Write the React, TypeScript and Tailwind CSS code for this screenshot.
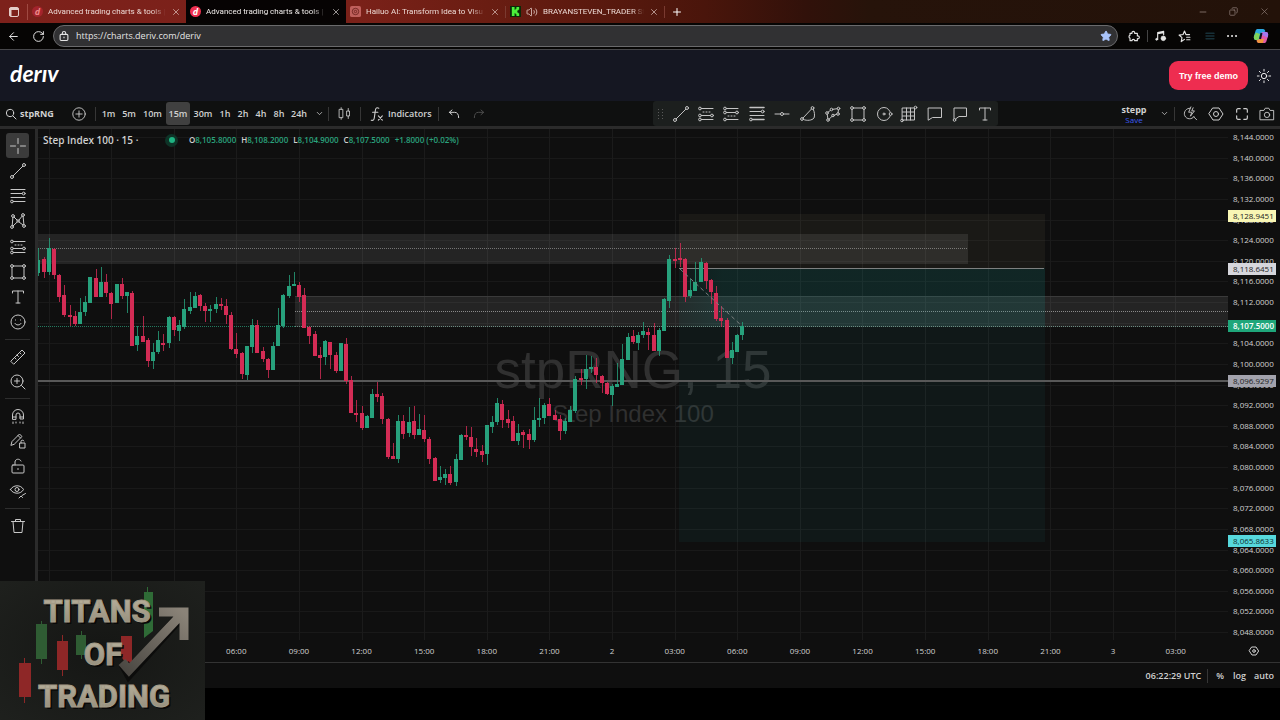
import type { ReactNode } from 'react';
import { ArrowLeft, ChevronDown, Copy, Minus, Plus, RotateCw, Star, Volume2, X } from 'lucide-react';

type Candle = [dir: 'u' | 'd', high: number, top: number, bottom: number, low: number];

// one entry per 15 minute bar, y values in chart space
const candles: Candle[] = [
    ['u', 248, 260, 273, 276], ['d', 257, 259, 272, 278], ['u', 238, 248, 272, 275], ['d', 248, 249, 275, 279],
    ['d', 274, 275, 297, 302], ['d', 285, 295, 315, 317], ['d', 305, 315, 316, 326], ['d', 311, 316, 324, 326],
    ['u', 298, 312, 324, 324], ['u', 296, 302, 312, 316], ['u', 277, 277, 303, 303], ['d', 269, 278, 297, 297],
    ['u', 267, 282, 297, 297], ['d', 274, 282, 293, 297], ['d', 292, 293, 304, 319], ['u', 284, 284, 303, 303],
    ['d', 278, 284, 296, 299], ['u', 292, 292, 296, 313], ['d', 291, 293, 346, 346], ['u', 326, 336, 345, 351],
    ['d', 316, 336, 342, 342], ['d', 338, 340, 361, 367], ['u', 343, 352, 361, 369], ['u', 331, 340, 352, 354],
    ['d', 334, 343, 344, 351], ['u', 316, 317, 343, 348], ['d', 316, 317, 330, 336], ['u', 320, 325, 331, 341],
    ['u', 299, 309, 327, 329], ['u', 292, 307, 311, 314], ['u', 292, 296, 308, 308], ['d', 294, 295, 306, 311],
    ['d', 303, 306, 311, 322], ['u', 305, 309, 311, 322], ['u', 297, 304, 309, 313], ['d', 298, 304, 305, 310],
    ['d', 299, 306, 315, 324], ['d', 312, 315, 349, 350], ['d', 333, 349, 354, 358], ['d', 352, 353, 374, 379],
    ['u', 346, 346, 375, 380], ['u', 319, 325, 347, 353], ['d', 320, 325, 353, 353], ['d', 347, 351, 359, 362],
    ['d', 358, 359, 370, 378], ['u', 342, 346, 370, 370], ['u', 308, 325, 346, 346], ['u', 294, 295, 326, 328],
    ['u', 275, 286, 296, 298], ['u', 272, 284, 286, 286], ['d', 282, 285, 297, 302], ['d', 288, 295, 328, 328],
    ['d', 326, 327, 336, 344], ['d', 331, 334, 356, 356], ['d', 347, 355, 358, 379], ['u', 340, 341, 357, 365],
    ['d', 342, 342, 355, 369], ['d', 352, 355, 371, 373], ['u', 343, 343, 371, 371], ['d', 338, 344, 381, 384],
    ['d', 376, 380, 413, 413], ['d', 400, 413, 414, 422], ['d', 406, 413, 428, 430], ['u', 415, 416, 428, 428],
    ['u', 389, 394, 418, 418], ['d', 382, 394, 397, 402], ['d', 393, 396, 419, 424], ['d', 418, 419, 457, 459],
    ['d', 443, 456, 459, 459], ['u', 415, 421, 459, 463], ['d', 415, 421, 434, 439], ['u', 407, 422, 433, 437],
    ['d', 406, 421, 435, 439], ['u', 414, 429, 435, 435], ['d', 415, 430, 439, 442], ['d', 437, 439, 459, 464],
    ['d', 457, 458, 481, 481], ['u', 466, 477, 480, 483], ['u', 469, 474, 478, 485], ['d', 466, 474, 483, 485],
    ['u', 454, 459, 482, 486], ['u', 434, 435, 460, 460], ['d', 426, 435, 437, 440], ['d', 427, 437, 447, 456],
    ['d', 438, 449, 452, 457], ['d', 445, 451, 455, 462], ['u', 425, 425, 454, 465], ['u', 416, 422, 427, 433],
    ['u', 398, 403, 422, 425], ['d', 400, 404, 420, 428], ['d', 410, 419, 423, 428], ['d', 416, 421, 441, 441],
    ['u', 424, 433, 441, 445], ['d', 430, 432, 435, 448], ['d', 429, 434, 440, 449], ['u', 407, 420, 440, 442],
    ['u', 398, 418, 420, 427], ['u', 403, 405, 418, 424], ['d', 398, 404, 416, 416], ['d', 410, 415, 420, 420],
    ['d', 415, 419, 431, 440], ['u', 418, 421, 431, 434], ['u', 406, 410, 422, 422], ['u', 376, 379, 411, 413],
    ['d', 369, 378, 379, 385], ['u', 355, 369, 379, 389], ['u', 356, 367, 369, 373], ['d', 358, 367, 375, 383],
    ['d', 375, 376, 383, 393], ['d', 382, 383, 394, 395], ['u', 384, 386, 395, 406], ['u', 363, 384, 387, 387],
    ['u', 344, 359, 385, 385], ['u', 333, 337, 360, 360], ['d', 330, 336, 342, 344], ['u', 332, 335, 343, 350],
    ['u', 322, 331, 335, 338], ['d', 328, 332, 335, 350], ['d', 323, 335, 351, 351], ['u', 328, 330, 351, 356],
    ['u', 298, 299, 331, 331], ['u', 255, 259, 301, 308], ['d', 248, 259, 260, 268], ['d', 243, 258, 260, 267],
    ['d', 258, 259, 297, 302], ['u', 279, 290, 296, 298], ['u', 262, 282, 291, 291], ['u', 258, 262, 282, 282],
    ['d', 262, 263, 281, 289], ['d', 279, 280, 292, 304], ['d', 286, 293, 319, 321], ['d', 306, 318, 321, 327],
    ['d', 318, 320, 358, 358], ['u', 342, 350, 358, 364], ['u', 334, 335, 352, 352], ['u', 322, 326, 335, 340],
];

const prices = Array.from({ length: 25 }, (_, i) => 8144 - i * 4);
const times = ['06:00', '09:00', '12:00', '15:00', '18:00', '21:00', '2', '03:00', '06:00', '09:00', '12:00', '15:00', '18:00', '21:00', '3', '03:00'];

const intervals = [
    { label: '1m', width: 'w-[21px]' },
    { label: '5m', width: 'w-5' },
    { label: '10m', width: 'w-[27px]' },
    { label: '15m', width: 'w-6' },
    { label: '30m', width: 'w-[26px]' },
    { label: '1h', width: 'w-[18px]' },
    { label: '2h', width: 'w-[18px]' },
    { label: '4h', width: 'w-[18px]' },
    { label: '8h', width: 'w-[18px]' },
    { label: '24h', width: 'w-[22px]' },
];

function Icon({ children, size = 'size-[18px]' }: { children: ReactNode; size?: string }) {
    return (
        <svg viewBox="0 0 18 18" className={`${size} shrink-0`} fill="none" stroke="currentColor" strokeWidth="1" strokeLinecap="round" strokeLinejoin="round">
            {children}
        </svg>
    );
}

const TrendIcon = () => (
    <Icon>
        <circle cx="3" cy="15" r="1.5" />
        <circle cx="15" cy="3" r="1.5" />
        <path d="M4.2 13.8 13.8 4.2" />
    </Icon>
);
const FibIcon = () => (
    <Icon>
        <path d="M2 2.5h14M2 6.5h11M2 10.5h14M4.5 14.5H16" />
        <circle cx="14.7" cy="6.5" r="1.4" />
        <circle cx="3" cy="14.5" r="1.4" />
    </Icon>
);
const PatternIcon = () => (
    <Icon>
        <circle cx="3" cy="15" r="1.4" />
        <circle cx="4" cy="4" r="1.4" />
        <circle cx="14" cy="3" r="1.4" />
        <circle cx="15" cy="14" r="1.4" />
        <circle cx="9" cy="9" r="1.2" />
        <path d="M3.2 13.6 3.9 5.4M5 5l3.2 3.2M10 8l3.2-4M14.1 4.4l.8 8.2M4 14l4.2-4M10 10l4 3" />
    </Icon>
);
const ShortIcon = () => (
    <Icon>
        <circle cx="3" cy="3.5" r="1.4" />
        <circle cx="3" cy="10.5" r="1.4" />
        <circle cx="3" cy="14.5" r="1.4" />
        <circle cx="15" cy="10.5" r="1.4" />
        <path d="M4.5 3.5H16M4.5 10.5h9M4.5 14.5H16" />
        <path d="M6 7h9" strokeDasharray="1 2" />
    </Icon>
);
const LongIcon = () => (
    <Icon>
        <circle cx="3" cy="3.5" r="1.4" />
        <circle cx="3" cy="7.5" r="1.4" />
        <circle cx="3" cy="14.5" r="1.4" />
        <circle cx="15" cy="7.5" r="1.4" />
        <path d="M4.5 3.5H16M4.5 7.5h9M4.5 14.5H16" />
        <path d="M6 11h9" strokeDasharray="1 2" />
    </Icon>
);
const LinesIcon = () => (
    <Icon>
        <path d="M2 10.5h14M2 6.5h11" />
        <path d="M2 2.5h14M4.5 14.5H16" strokeWidth="1.5" />
        <circle cx="14.7" cy="6.5" r="1.4" />
        <circle cx="3" cy="14.5" r="1.4" />
    </Icon>
);
const HLineIcon = () => (
    <Icon>
        <circle cx="9" cy="9" r="1.5" />
        <path d="M2 9h5.5M10.5 9H16" />
    </Icon>
);
const CurveIcon = () => (
    <Icon>
        <circle cx="3" cy="14" r="1.4" />
        <circle cx="13.5" cy="3" r="1.4" />
        <path d="M4 13 12.5 4M4.500 14.500c3.500 1.500 8.500 1 10.500-1.500 1-2.500.5-6-.7-8.700" />
    </Icon>
);
const PolyIcon = () => (
    <Icon>
        <circle cx="3" cy="8" r="1.3" />
        <circle cx="7.5" cy="4.5" r="1.3" />
        <circle cx="14.5" cy="3.5" r="1.3" />
        <circle cx="14" cy="9" r="1.3" />
        <circle cx="9" cy="10.5" r="1.3" />
        <circle cx="4" cy="15" r="1.3" />
        <path d="M4 7.200 6.500 5.300M8.800 4.300l4.400-.6M14.400 4.800l-.3 2.900M12.700 9.200l-2.500 1M8 11.400 5 14.200M3.200 9.300l.7 4.400" />
    </Icon>
);
const RectIcon = () => (
    <Icon>
        <circle cx="3" cy="3" r="1.4" />
        <circle cx="15" cy="3" r="1.4" />
        <circle cx="3" cy="15" r="1.4" />
        <circle cx="15" cy="15" r="1.4" />
        <path d="M4.4 3h9.2M4.4 15h9.2M3 4.4v9.2M15 4.4v9.2" />
    </Icon>
);
const CircleIcon = () => (
    <Icon>
        <circle cx="9" cy="9" r="6.5" />
        <circle cx="9" cy="9" r="1" />
        <circle cx="15.6" cy="9" r="1.4" fill="#1c1f1e" />
    </Icon>
);
const GridIcon = () => (
    <Icon>
        <path d="M2.500 3h12v12h-12zM6.500 3v12M10.500 3v12M2.500 7h12M2.500 11h12" />
        <circle cx="15.5" cy="2.5" r="1.3" />
        <circle cx="2" cy="15.5" r="1.3" />
    </Icon>
);
const NoteIcon = () => (
    <Icon>
        <path d="M2.5 3h13v9.5h-9L2.5 15z" />
    </Icon>
);
const CalloutIcon = () => (
    <Icon>
        <path d="M3 13.5V3h12.5v8.5H8L4.5 14" />
        <circle cx="3.5" cy="15" r="1.3" />
    </Icon>
);
const TextIcon = () => (
    <Icon>
        <path d="M3.5 5V3h11v2M9 3v12M7 15h4" />
    </Icon>
);
const GearIcon = () => (
    <Icon>
        <path d="M6 3h6l4 6-4 6H6L2 9z" />
        <circle cx="9" cy="9" r="2.5" />
    </Icon>
);

const drawTools: [string, ReactNode][] = [
    ['Cross', <Icon><path d="M9 1.5v5M9 11.5v5M1.5 9h5M11.5 9h5" /></Icon>],
    ['Trend line', <TrendIcon />],
    ['Fib retracement', <FibIcon />],
    ['Pattern', <PatternIcon />],
    ['Position', <ShortIcon />],
    ['Shapes', <RectIcon />],
    ['Text', <TextIcon />],
    ['Emoji', <Icon><circle cx="9" cy="9" r="7" /><path d="M6 10.5c1 2 5 2 6 0M6.5 7h.1M11.4 7h.1" /></Icon>],
];
const viewTools: [string, ReactNode][] = [
    ['Measure', <Icon><path d="m2 13 11-11 3 3L5 16zM10.500 4.500l1.500 1.500M8 7l1.500 1.500M5.500 9.500 7 11" /></Icon>],
    ['Zoom in', <Icon><circle cx="8" cy="8" r="6" /><path d="m12.500 12.500 3.500 3.500M8 5.500v5M5.500 8h5" /></Icon>],
];
const stateTools: [string, ReactNode][] = [
    ['Magnet', <Icon><path d="M3.500 12V8a5.500 5.500 0 0 1 11 0v4h-3.500V8a2 2 0 0 0-4 0v4zM3.500 10H7M11 10h3.500M4 15v1.500M14 15v1.500M7 15v1M11 15v1" /></Icon>],
    ['Stay in drawing mode', <Icon><path d="m2 13 1-3.500L10.500 2l2.500 2.500-7.500 7.500zM9 3.500 11.500 6M11 11h5v5h-5zM12 11V9.500c0-1.500 2-2 3-.5" /></Icon>],
    ['Lock', <Icon><rect x="3" y="8" width="12" height="8" rx="1" /><path d="M6 8V5c0-3 4.500-4 6-1M9 11.500v1" /></Icon>],
    ['Hide', <Icon><path d="M1.500 7.500C4 2.500 12 2.500 14.500 7.500 12 12.500 4 12.500 1.500 7.500z" /><circle cx="8" cy="7.5" r="2" /><path d="m10 16 2-2 1.500 1.500M13 13.500l3.500-2" /></Icon>],
];
const removeTools: [string, ReactNode][] = [
    ['Remove', <Icon><path d="M2.500 4.500h13M6.500 4.500V2.500h5v2M4 4.500 5 15.500h8l1-11" /></Icon>],
];

const favorites: [string, ReactNode][] = [
    ['Trend line', <TrendIcon />],
    ['Short position', <ShortIcon />],
    ['Long position', <LongIcon />],
    ['Fib retracement', <LinesIcon />],
    ['Horizontal line', <HLineIcon />],
    ['Curve', <CurveIcon />],
    ['Path', <PolyIcon />],
    ['Rectangle', <RectIcon />],
    ['Circle', <CircleIcon />],
    ['Gann box', <GridIcon />],
    ['Comment', <NoteIcon />],
    ['Callout', <CalloutIcon />],
    ['Text', <TextIcon />],
];

function DerivBadge({ className }: { className: string }) {
    return (
        <span className={`flex size-[11px] shrink-0 items-center justify-center rounded-full text-[9px] leading-none font-bold italic ${className}`}>
            d
        </span>
    );
}

function Tab({ icon, title, active, width }: { icon: ReactNode; title: string; active?: boolean; width: string }) {
    return (
        <div className={`flex h-full items-center gap-[5px] pl-1 pr-[5px] ${width} ${active ? 'bg-[#060303] text-[#f0ecea]' : 'text-[#ecd9d4]'}`}>
            {icon}
            <span className="min-w-0 flex-1 overflow-hidden whitespace-nowrap font-['Roboto',sans-serif] text-[8px] leading-3 [mask-image:linear-gradient(to_right,black_88%,transparent)]">
                {title}
            </span>
            <button aria-label="Close tab">
                <X className="size-[10px]" strokeWidth={1.5} />
            </button>
        </div>
    );
}

function BrowserChrome() {
    return (
        <header>
            <div className="flex h-[23px] items-center bg-[linear-gradient(to_right,#7d211b_0%,#7a2119_28%,#6a1d12_38%,#4a150b_55%,#31110a_63%,#26130a_68%,#231209_100%)] text-[#e3cdc8]">
                <button aria-label="Tab actions" className="flex w-[27px] justify-center">
                    <svg viewBox="0 0 12 12" className="size-3" fill="none" stroke="currentColor">
                        <rect x="1.5" y="1.5" width="9" height="9" rx="1.5" />
                        <path d="M1.500 3h9M2.500 4v6" strokeWidth="2" />
                    </svg>
                </button>
                <div className="h-4 w-px bg-[#a04a42]" />
                <Tab width="w-[158px]" icon={<DerivBadge className="bg-[#a3242c] text-[#e88]" />} title="Advanced trading charts & tools |" />
                <Tab width="w-[160px]" active icon={<DerivBadge className="bg-[#ee3050] text-white" />} title="Advanced trading charts & tools |" />
                <Tab
                    width="w-[159px]"
                    icon={
                        <svg viewBox="0 0 12 12" className="size-[11px] shrink-0">
                            <rect width="12" height="12" rx="2" fill="#c0605c" />
                            <circle cx="6" cy="6" r="3.5" fill="none" stroke="#6e2420" />
                            <circle cx="6" cy="6" r="1.3" fill="none" stroke="#6e2420" />
                        </svg>
                    }
                    title="Hailuo AI: Transform Idea to Visu"
                />
                <div className="h-3 w-px bg-[#7a3a30]" />
                <Tab
                    width="w-[158px]"
                    icon={
                        <>
                            <svg viewBox="0 0 12 12" className="size-[11px] shrink-0">
                                <rect width="12" height="12" fill="#0a2a08" />
                                <path d="M2 1h3v3h1V3h1V1h3v3H9v1H8v2h1v1h1v3H7V9H6V8H5v3H2z" fill="#4cf03a" />
                            </svg>
                            <Volume2 className="size-3 shrink-0" strokeWidth={1.5} />
                        </>
                    }
                    title="BRAYANSTEVEN_TRADER Str"
                />
                <div className="h-3 w-px bg-[#7a3a30]" />
                <button aria-label="New tab" className="flex w-6 justify-center text-white">
                    <Plus className="size-3" strokeWidth={2} />
                </button>
                <div className="ml-auto flex w-[82px] justify-between pr-2.5 text-[#8c7b75]">
                    <button aria-label="Minimize"><Minus className="size-[10px]" strokeWidth={2} /></button>
                    <button aria-label="Restore"><Copy className="size-[9px] -scale-x-100" strokeWidth={2} /></button>
                    <button aria-label="Close"><X className="size-[11px]" strokeWidth={1.5} /></button>
                </div>
            </div>

            <div className="flex h-[27px] items-center border-b border-[#47474a] bg-[#060504] text-[#e4e4e4]">
                <button aria-label="Back" className="flex w-[26px] justify-center"><ArrowLeft className="size-[13px]" strokeWidth={1.8} /></button>
                <button aria-label="Reload" className="mr-[3px] flex w-6 justify-center"><RotateCw className="size-[13px]" strokeWidth={1.8} /></button>
                <label className="flex h-[22px] flex-1 items-center gap-[7px] rounded-full border border-[#6a6a6c] bg-[#313133] px-[5px]">
                    <Icon size="size-[10px]">
                        <rect x="2" y="6" width="14" height="11" rx="2" strokeWidth="2" />
                        <path d="M6 6V4a3 3 0 0 1 6 0v2M9 11v1" strokeWidth="2" />
                    </Icon>
                    <input
                        aria-label="Address"
                        defaultValue="https://charts.deriv.com/deriv"
                        className="min-w-0 flex-1 bg-transparent text-[9px] leading-4 outline-none"
                    />
                    <Star className="size-3 fill-[#a9c4fb] text-[#a9c4fb]" />
                </label>
                <div className="flex w-[162px] items-center pl-[9px]">
                    <button aria-label="Extensions" className="flex w-[14px] justify-center">
                        <Icon size="size-3">
                            <path d="M3 5h3c-1-4 5-4 4 0h4v4c4-1 4 5 0 4v3h-4c0-2.500-4-2.500-4 0H3v-4c-2 0-2-4 0-4z" strokeWidth="1.7" />
                        </Icon>
                    </button>
                    <div className="mx-[6px] h-3 w-px bg-[#444]" />
                    <button aria-label="Media" className="flex w-[14px] justify-center">
                        <Icon size="size-3">
                            <path d="M4 14V4l9-2v5M4 5.500 13 4" strokeWidth="1.7" />
                            <circle cx="2.5" cy="14" r="1.5" fill="currentColor" />
                            <circle cx="12.5" cy="12.5" r="3.5" fill="currentColor" />
                        </Icon>
                    </button>
                    <button aria-label="Favorites" className="ml-[9px] flex w-[14px] justify-center">
                        <Icon size="size-[13px]">
                            <path d="M9 13 4.500 16l1-5.500-4-3.500L7 6.300 9 1.500l2 4.800h5M12 10h4.500M12 13.500h4.500" strokeWidth="1.6" />
                        </Icon>
                    </button>
                    <button aria-label="Collections" className="ml-3 flex w-[14px] justify-center text-[#173038]">
                        <Icon size="size-[10px]"><path d="M2 4h14M2 9h14M2 14h14" strokeWidth="3" /></Icon>
                    </button>
                    <button aria-label="More" className="ml-2 flex w-[14px] justify-center">
                        <Icon size="size-3"><path d="M3 9h.1M9 9h.1M15 9h.1" strokeWidth="3" /></Icon>
                    </button>
                    <button aria-label="Copilot" className="ml-[14px] flex size-4 items-center justify-center">
                        <svg viewBox="0 0 16 16" className="size-4">
                            <path d="M5 1h5c1.500 0 2 1 2.400 2.500L9 5 7 12H3C1 12 .5 10 1 8l1.500-5C3 1.500 3.500 1 5 1z" fill="#2ba6e0" />
                            <path d="M3 4.500 7 6l-1.500 6H3C1 12 .5 10 1 8z" fill="#7fd45a" />
                            <path d="M11 15H6c-1.500 0-2-1-2.400-2.500L7 11l2-7h4c2 0 2.500 2 2 4l-1.500 5c-.5 1.500-1 2-2.500 2z" fill="#e05aa8" />
                            <path d="M6 15c-1.500 0-2-1-2.400-2.500L7 11h4l-1 4z" fill="#f0953c" />
                            <path d="M9.500 4H13c2 0 2.500 2 2 4l-.5 1.500L9 7z" fill="#a678ee" />
                            <path d="m8.500 5-1.500 6" stroke="#10131c" strokeWidth="2" />
                        </svg>
                    </button>
                </div>
            </div>
        </header>
    );
}

function SiteHeader() {
    return (
        <div className="flex h-[51px] items-center bg-[#151722] px-2.5 text-white">
            <a href="#" className="pb-[5px] font-['Lato','Open_Sans',sans-serif] text-[23px] leading-6 font-bold italic">derıv</a>
            <button className="ml-auto h-[29px] rounded-[9px] bg-[#ee2d50] px-[10px] font-['Liberation_Sans',sans-serif] text-[9px] leading-3 font-bold">
                Try free demo
            </button>
            <button aria-label="Theme" className="-mr-[2px] ml-2">
                <Icon size="size-4">
                    <circle cx="9" cy="9" r="3" />
                    <path d="M9 1.500v2M9 14.500v2M1.500 9h2M14.500 9h2M3.700 3.700l1.400 1.400M12.900 12.900l1.400 1.400M3.700 14.300l1.400-1.400M12.900 5.100l1.400-1.400" />
                </Icon>
            </button>
        </div>
    );
}

function Separator() {
    return <div className="h-[14px] w-px shrink-0 bg-[#363636]" />;
}

function ChartToolbar() {
    return (
        <div className="flex h-[25px] items-center bg-[#0f1010] text-[9px] leading-3 font-semibold text-[#d0d0d0]">
            <button className="flex w-[70px] items-center gap-[3px] pl-[5px] font-bold">
                <Icon size="size-3">
                    <circle cx="7.5" cy="7.5" r="5.5" strokeWidth="1.5" />
                    <path d="m12 12 4.500 4.500" strokeWidth="1.5" />
                </Icon>
                stpRNG
            </button>
            <button aria-label="Compare" className="mr-[7px] flex w-[18px] justify-center">
                <Icon size="size-4"><circle cx="9" cy="9" r="7" /><path d="M9 5.500v7M5.500 9h7" /></Icon>
            </button>
            <Separator />
            <div className="flex pl-[2px]">
                {intervals.map(({ label, width }) => (
                    <button key={label} className={`h-[23px] rounded-[3px] ${width} ${label === '15m' ? 'bg-[#404040]' : ''}`}>
                        {label}
                    </button>
                ))}
            </div>
            <button aria-label="More intervals" className="flex w-[18px] justify-center"><ChevronDown className="size-[9px]" /></button>
            <Separator />
            <button aria-label="Chart type" className="flex w-[31px] justify-center">
                <Icon size="size-[15px]"><path d="M3 4h4v10H3zM5 2v2M5 14v2M12 6h3v6h-3zM13.500 3v3M13.500 12v3" /></Icon>
            </button>
            <Separator />
            <button className="flex w-[77px] items-center gap-[3px] pl-2">
                <Icon size="size-4"><path d="M11 2.500C8 1 7.300 3 7 6L6 13c-.4 3-1.500 3.500-3.500 3M4 7h6M10.500 11l4.500 5M15 11l-4.500 5" strokeWidth="1.2" /></Icon>
                Indicators
            </button>
            <Separator />
            <button aria-label="Undo" className="flex w-[30px] justify-center">
                <Icon size="size-3"><path d="M6 3 2 6.500 6 10M2 6.500h8c4 0 6 3 6 8" strokeWidth="1.5" /></Icon>
            </button>
            <button aria-label="Redo" className="flex w-5 justify-center text-[#4c4c4c]">
                <Icon size="size-3"><path d="m12 3 4 3.500-4 3.500M16 6.500H8c-4 0-6 3-6 8" strokeWidth="1.5" /></Icon>
            </button>

            <div className="ml-auto flex h-[25px] w-[345px] items-center rounded-[3px] bg-[#1c1f1e] text-[#c4c4c4]">
                <svg viewBox="0 0 15 12" className="w-[15px] fill-[#5a5a5a]">
                    <path d="M5 1h1v1H5zM9 1h1v1H9zM5 4h1v1H5zM9 4h1v1H9zM5 7h1v1H5zM9 7h1v1H9zM5 10h1v1H5zM9 10h1v1H9z" />
                </svg>
                {favorites.map(([name, icon]) => (
                    <button key={name} aria-label={name} className="flex flex-1 justify-center">{icon}</button>
                ))}
            </div>

            <div className="flex w-[282px] items-center justify-end">
                <button className="w-8 text-center font-bold">
                    <span className="block leading-[11px]">stepp</span>
                    <span className="block text-[8px] leading-[9px] font-normal text-[#3c5cf0]">Save</span>
                </button>
                <button aria-label="Layouts" className="ml-[5px] mr-px flex w-[18px] justify-center"><ChevronDown className="size-[9px]" /></button>
                <Separator />
                <button aria-label="Quick search" className="ml-[2px] flex w-[26px] justify-center">
                    <Icon size="size-4"><path d="M9 2.500a6 6 0 1 0 4.500 9.500M13 12l3.500 3.500M10 1 7.500 7H11l-1.500 4.500L14 5.500h-3L12.500 2" /></Icon>
                </button>
                <button aria-label="Settings" className="flex w-[26px] justify-center"><GearIcon /></button>
                <button aria-label="Fullscreen" className="flex w-[25px] justify-center">
                    <Icon size="size-4"><path d="M3 7V4.500A1.500 1.500 0 0 1 4.500 3H7M11 3h2.500A1.500 1.500 0 0 1 15 4.500V7M15 11v2.500a1.500 1.500 0 0 1-1.500 1.500H11M7 15H4.500A1.500 1.500 0 0 1 3 13.500V11" strokeWidth="1.3" /></Icon>
                </button>
                <button aria-label="Snapshot" className="flex w-[26px] justify-center">
                    <Icon size="size-4"><path d="M1.500 5h4l1.500-2.500h4L12.500 5h4v10.500h-15z" /><circle cx="9" cy="10" r="3" /></Icon>
                </button>
            </div>
        </div>
    );
}

function ToolGroup({ tools, height }: { tools: [string, ReactNode][]; height: string }) {
    return (
        <div className={`flex flex-col items-center ${height}`}>
            {tools.map(([name, icon]) => (
                <button
                    key={name}
                    aria-label={name}
                    className={`flex w-[23px] flex-1 items-center justify-center rounded-[3px] ${name === 'Cross' ? 'bg-[#3b3b3b]' : ''}`}
                >
                    {icon}
                </button>
            ))}
        </div>
    );
}

function DrawingBar() {
    const divider = <div className="mx-[5px] my-1 h-px bg-[#2e2e2e]" />;
    return (
        <nav className="w-[35px] shrink-0 bg-[#0f0f0f] pt-1 text-[#c8c8c8]">
            <ToolGroup tools={drawTools} height="h-[202px]" />
            {divider}
            <ToolGroup tools={viewTools} height="h-[50px]" />
            {divider}
            <ToolGroup tools={stateTools} height="h-[101px]" />
            {divider}
            <ToolGroup tools={removeTools} height="h-[25px]" />
        </nav>
    );
}

function Plot() {
    return (
        <svg className="h-[511px] w-full" shapeRendering="crispEdges">
            <defs>
                <linearGradient id="profit" x1="0" x2="1">
                    <stop offset="0" stopColor="#18a098" stopOpacity="0.07" />
                    <stop offset="0.12" stopColor="#18a098" stopOpacity="0.16" />
                    <stop offset="1" stopColor="#18a098" stopOpacity="0.16" />
                </linearGradient>
            </defs>
            <g transform="translate(-38 -129)">
                {prices.map((p, i) => (
                    <rect key={p} x="38" y={Math.round(137 + i * 20.625)} width="100%" height="1" fill="#191919" />
                ))}
                {Array.from({ length: 19 }, (_, i) => (
                    <rect key={i} x={Math.round(48.6 + i * 62.6)} y="129" width="1" height="511" fill="#1b1b1b" />
                ))}

                <g fill="#303030" fontFamily="'Liberation Sans', sans-serif" textAnchor="middle">
                    <text x="633" y="388" fontSize="53">stpRNG, 15</text>
                    <text x="633" y="422" fontSize="24">Step Index 100</text>
                </g>

                {/* supply zones */}
                <rect x="38" y="234" width="930" height="30" fill="#fff" fillOpacity="0.09" />
                <rect x="295" y="296" width="933" height="31" fill="#fff" fillOpacity="0.09" />
                <path d="M38 248.5H968" stroke="#757575" strokeDasharray="1 1" />
                <path d="M295 311.5H1228" stroke="#8a8a8a" strokeDasharray="1 1" />
                <path d="M295 296.5H1228" stroke="#3a3a3a" />

                {/* short position */}
                <rect x="679" y="214" width="366" height="54" fill="#f0d8a0" fillOpacity="0.05" />
                <rect x="679" y="268" width="366" height="59" fill="url(#profit)" />
                <rect x="679" y="327" width="366" height="215" fill="#30a0a0" fillOpacity="0.07" />
                <rect x="679" y="268" width="365" height="1" fill="#7d8080" />

                <rect x="38" y="380" width="100%" height="2" fill="#585858" />
                <path d="M38 326.5H295" stroke="#23795f" strokeDasharray="1 1" />
                <path d="M295 326.5H1228" stroke="#6b8a80" strokeDasharray="1 1" />

                {candles.map(([dir, high, top, bottom, low], i) => {
                    const x = Math.round(38.3 + i * 5.215);
                    return (
                        <g key={i} fill={dir === 'u' ? '#27a17c' : '#d32c55'}>
                            <rect x={x} y={high} width="1" height={low - high} fillOpacity="0.8" />
                            <rect x={x - 2} y={top} width="4" height={Math.max(2, bottom - top)} />
                        </g>
                    );
                })}
                <path d="M680 269 742 326" stroke="#7b8080" strokeDasharray="4 3" shapeRendering="auto" />
            </g>
        </svg>
    );
}

function PriceTag({ className, children }: { className: string; children: ReactNode }) {
    return <div className={`absolute left-0 right-1 h-3 pl-[5px] leading-3 ${className}`}>{children}</div>;
}

function PriceAxis() {
    return (
        <div className="relative flex w-[52px] shrink-0 flex-col justify-between text-[8px] text-[#d2d2d2]">
            {prices.map((p) => (
                <span key={p} className="pl-[5px] leading-4">
                    {p.toLocaleString('en-US', { minimumFractionDigits: 4 })}
                </span>
            ))}
            <PriceTag className="top-[81px] bg-[#f8f6b4] text-[#222]">8,128.9451</PriceTag>
            <PriceTag className="top-[134px] bg-[#d6d6dc] text-[#222]">8,118.6451</PriceTag>
            <PriceTag className="top-[191px] bg-[#1fa67a] font-semibold text-white">8,107.5000</PriceTag>
            <PriceTag className="top-[246px] bg-[#a3a3ad] text-[#222]">8,096.9297</PriceTag>
            <PriceTag className="top-[406px] bg-[#56d8dc] text-[#10302f]">8,065.8633</PriceTag>
        </div>
    );
}

function Legend() {
    const values = [['O', '8,105.8000'], ['H', '8,108.2000'], ['L', '8,104.9000'], ['C', '8,107.5000']];
    return (
        <div className="absolute top-1 left-[5px] flex items-center leading-[14px]">
            <span className="w-[122px] text-[10px] font-semibold text-[#d0d0d0]">Step Index 100 · 15 ·</span>
            <span className="mr-[11px] flex size-[13px] items-center justify-center rounded-full bg-[#0e3327]">
                <span className="size-[6px] rounded-full bg-[#1fb382]" />
            </span>
            <div className="flex gap-[5px] text-[8px] font-semibold text-[#2aa37d]">
                {values.map(([k, v]) => (
                    <span key={k}><span className="text-[#d0d0d0]">{k}</span>{v}</span>
                ))}
                <span>+1.8000 (+0.02%)</span>
            </div>
        </div>
    );
}

function StreamLogo() {
    return (
        <svg viewBox="0 0 205 139" className="absolute bottom-0 left-0 h-[139px] w-[205px]">
            <defs>
                <radialGradient id="wall" cx="0.5" cy="0.5" r="0.75">
                    <stop offset="0" stopColor="#151614" />
                    <stop offset="1" stopColor="#1f211e" />
                </radialGradient>
                <linearGradient id="stone" x1="0" x2="0" y1="0" y2="1">
                    <stop offset="0" stopColor="#bcb49f" />
                    <stop offset="1" stopColor="#8f8877" />
                </linearGradient>
                <linearGradient id="steel" x1="0" x2="1" y1="1" y2="0">
                    <stop offset="0" stopColor="#4a4742" />
                    <stop offset="1" stopColor="#8a8378" />
                </linearGradient>
            </defs>
            <rect width="205" height="139" fill="url(#wall)" />
            <g fill="#2f5c33">
                <path d="M36 43h11v35H36zM41 40h1v43h-1z" />
                <path d="M76 54h10v20H76zM81 50h1v28h-1z" />
                <path d="M144 11h9v39l-9 7zM147 6h1v6h-1z" fill="#2f6b36" />
            </g>
            <g fill="#8e2727">
                <path d="M57 60h11v29H57zM62 54h1v41h-1z" />
                <path d="M19 82h12v34H19zM24 77h1v45h-1z" />
                <path d="M121 55h11v32l-6-4-5-8z" />
            </g>
            <path d="M124 83 129 92 178 38" fill="none" stroke="#0c0c0b" strokeWidth="11" />
            <path d="M122 81 129 89 180 35M159 31h25v28" fill="none" stroke="url(#steel)" strokeWidth="9" strokeLinejoin="miter" />
            <g fontFamily="Roboto, 'Liberation Sans', sans-serif" fontWeight="700" textAnchor="middle">
                <g fill="#090908">
                    <text x="99" y="43" fontSize="31">TITANS</text>
                    <text x="105" y="86" fontSize="31">OF</text>
                    <text x="106" y="128" fontSize="31">TRADING</text>
                </g>
                <g fill="url(#stone)" stroke="#a39b88">
                    <text x="97" y="41" fontSize="31">TITANS</text>
                    <text x="103" y="84" fontSize="31">OF</text>
                    <text x="104" y="126" fontSize="31">TRADING</text>
                </g>
            </g>
        </svg>
    );
}

export default function App() {
    return (
        <div className="relative flex min-h-screen flex-col bg-black font-['Open_Sans','Noto_Sans',sans-serif]">
            <BrowserChrome />
            <SiteHeader />
            <ChartToolbar />
            <main className="flex border-t-[3px] border-[#2b2b2b]">
                <DrawingBar />
                <div className="flex min-w-0 flex-1 flex-col border-l-[3px] border-[#2b2b2b] bg-[#0f0f0f]">
                    <div className="flex">
                        <div className="relative min-w-0 flex-1">
                            <Plot />
                            <Legend />
                        </div>
                        <PriceAxis />
                    </div>
                    <div className="flex h-[22px] items-center text-[8px] leading-3 text-[#d2d2d2]">
                        <div className="ml-[167px] mr-[21px] flex flex-1">
                            {times.map((t, i) => (
                                <span key={i} className="flex-1 text-center">{t}</span>
                            ))}
                        </div>
                        <button aria-label="Axis settings" className="flex w-[52px] justify-center">
                            <Icon size="size-3"><path d="M6 3h6l4 6-4 6H6L2 9z" strokeWidth="1.5" /><circle cx="9" cy="9" r="2" strokeWidth="1.5" /></Icon>
                        </button>
                    </div>
                </div>
            </main>
            <footer className="flex h-[26px] items-center justify-end border-t border-[#333] bg-[#0f0f0f] pr-[6px] text-[9px] leading-3 font-semibold text-[#d0d0d0]">
                <span className="mr-[6px]">06:22:29 UTC</span>
                <Separator />
                <button className="ml-2">%</button>
                <button className="ml-[9px]">log</button>
                <button className="ml-2">auto</button>
            </footer>
            <StreamLogo />
        </div>
    );
}
